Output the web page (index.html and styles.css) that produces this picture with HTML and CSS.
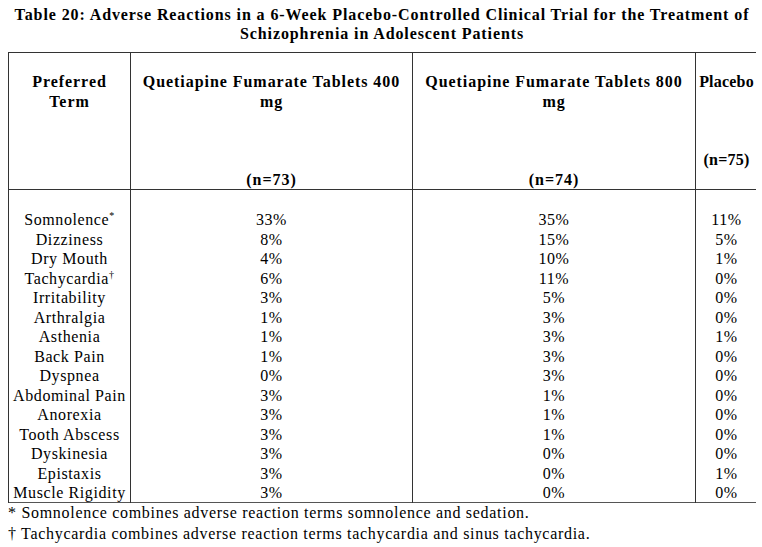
FILE: index.html
```html
<!DOCTYPE html>
<html>
<head>
<meta charset="utf-8">
<link rel="stylesheet" href="styles.css">
</head>
<body>
<h1 class="title">Table 20: Adverse Reactions in a 6-Week Placebo-Controlled Clinical Trial for the Treatment of<br>Schizophrenia in Adolescent Patients</h1>
<table class="ae">
  <colgroup>
    <col class="c1"><col class="c2"><col class="c3"><col class="c4">
  </colgroup>
  <thead>
    <tr>
      <th>Preferred<br>Term</th>
      <th>Quetiapine Fumarate Tablets 400<br>mg<br><br><br><br>(n=73)</th>
      <th>Quetiapine Fumarate Tablets 800<br>mg<br><br><br><br>(n=74)</th>
      <th class="narrow">Placebo<br><br><br><br>(n=75)</th>
    </tr>
  </thead>
  <tbody>
    <tr class="first"><td>Somnolence<sup>*</sup></td><td>33%</td><td>35%</td><td>11%</td></tr>
    <tr><td>Dizziness</td><td>8%</td><td>15%</td><td>5%</td></tr>
    <tr><td>Dry Mouth</td><td>4%</td><td>10%</td><td>1%</td></tr>
    <tr><td>Tachycardia<sup>†</sup></td><td>6%</td><td>11%</td><td>0%</td></tr>
    <tr><td>Irritability</td><td>3%</td><td>5%</td><td>0%</td></tr>
    <tr><td>Arthralgia</td><td>1%</td><td>3%</td><td>0%</td></tr>
    <tr><td>Asthenia</td><td>1%</td><td>3%</td><td>1%</td></tr>
    <tr><td>Back Pain</td><td>1%</td><td>3%</td><td>0%</td></tr>
    <tr><td>Dyspnea</td><td>0%</td><td>3%</td><td>0%</td></tr>
    <tr><td>Abdominal Pain</td><td>3%</td><td>1%</td><td>0%</td></tr>
    <tr><td>Anorexia</td><td>3%</td><td>1%</td><td>0%</td></tr>
    <tr><td>Tooth Abscess</td><td>3%</td><td>1%</td><td>0%</td></tr>
    <tr><td>Dyskinesia</td><td>3%</td><td>0%</td><td>0%</td></tr>
    <tr><td>Epistaxis</td><td>3%</td><td>0%</td><td>1%</td></tr>
    <tr class="last"><td>Muscle Rigidity</td><td>3%</td><td>0%</td><td>0%</td></tr>
  </tbody>
</table>
<p class="note">* Somnolence combines adverse reaction terms somnolence and sedation.</p>
<p class="note">† Tachycardia combines adverse reaction terms tachycardia and sinus tachycardia.</p>
</body>
</html>
```

FILE: styles.css
```css
html, body {
  background: #fff;
}
body {
  margin: 5px 6px 0 8px;
  font-family: "Liberation Serif", "Times New Roman", serif;
  color: #000;
  font-size: 16px;
}
.title {
  margin: 0 0 9px 0;
  font-size: 16px;
  font-weight: bold;
  text-align: center;
  line-height: 19px;
  letter-spacing: 0.9px;
}
.ae {
  border-collapse: collapse;
  width: 749px;
  table-layout: fixed;
  border: 1px solid #555;
}
.c1 { width: 122px; }
.c2 { width: 282px; }
.c3 { width: 283px; }
.c4 { width: 62px; }
.ae th {
  font-weight: bold;
  text-align: center;
  vertical-align: top;
  padding: 19px 0 0 0;
  line-height: 19.5px;
  border: 1px solid #333;
  letter-spacing: 0.95px;
  white-space: nowrap;
}
.ae th.narrow {
  letter-spacing: 0.2px;
}
.ae td {
  text-align: center;
  padding: 0;
  line-height: 19.5px;
  border-left: 1px solid #333;
  border-right: 1px solid #333;
  white-space: nowrap;
  letter-spacing: 0.6px;
}
.ae tr.first td {
  padding-top: 20px;
}
.ae tr.last td {
  line-height: 19px;
}
.ae sup {
  font-size: 10px;
  line-height: 0;
  vertical-align: 6px;
}
.note {
  margin: 0;
  line-height: 20.5px;
  letter-spacing: 0.7px;
}
```
